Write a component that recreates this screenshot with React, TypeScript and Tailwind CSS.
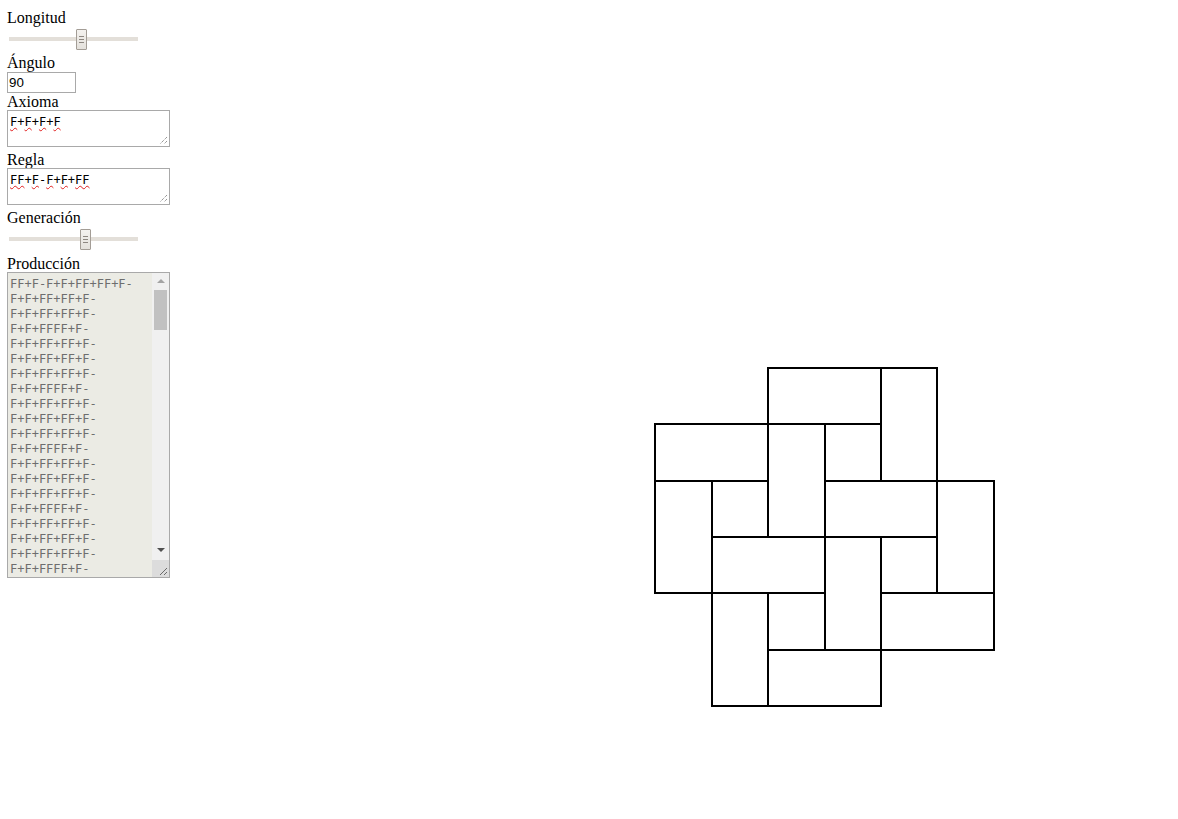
import React from 'react';

const GX = [655, 712, 768, 825, 881, 937, 994];
const GY = [368, 424, 481, 537, 593, 650, 706];

// [fixed index, from, to] on the grid
const horizontal: [number, number, number][] = [
  [0, 2, 5],
  [1, 0, 4],
  [2, 0, 2],
  [2, 3, 6],
  [3, 1, 5],
  [4, 0, 3],
  [4, 4, 6],
  [5, 2, 6],
  [6, 1, 4],
];

const vertical: [number, number, number][] = [
  [0, 1, 4],
  [1, 2, 6],
  [2, 0, 3],
  [2, 4, 6],
  [3, 1, 5],
  [4, 0, 2],
  [4, 3, 6],
  [5, 0, 4],
  [6, 2, 5],
];

const production = [
  'FF+F-F+F+FF+FF+F-',
  'F+F+FF+FF+F-',
  'F+F+FF+FF+F-',
  'F+F+FFFF+F-',
  'F+F+FF+FF+F-',
  'F+F+FF+FF+F-',
  'F+F+FF+FF+F-',
  'F+F+FFFF+F-',
  'F+F+FF+FF+F-',
  'F+F+FF+FF+F-',
  'F+F+FF+FF+F-',
  'F+F+FFFF+F-',
  'F+F+FF+FF+F-',
  'F+F+FF+FF+F-',
  'F+F+FF+FF+F-',
  'F+F+FFFF+F-',
  'F+F+FF+FF+F-',
  'F+F+FF+FF+F-',
  'F+F+FF+FF+F-',
  'F+F+FFFF+F-',
];

function Slider({ thumb }: { thumb: number }) {
  return (
    <div className="relative h-[28px] w-[140px]">
      <div className="absolute left-[2px] top-[11px] h-[4px] w-[129px] bg-[#e3dfd9]" />
      <div
        className="absolute top-[3px] flex h-[21px] w-[11px] flex-col items-center gap-[2px] rounded-[1px] border border-[#a39d96] bg-gradient-to-b from-[#f4f2ef] to-[#e4e1dc] pt-[6px]"
        style={{ left: thumb }}
      >
        <div className="h-px w-[5px] bg-[#8d8781]" />
        <div className="h-px w-[5px] bg-[#8d8781]" />
        <div className="h-px w-[5px] bg-[#8d8781]" />
      </div>
    </div>
  );
}

function Grip() {
  return (
    <svg className="absolute bottom-[1px] right-[1px]" width="10" height="10" viewBox="0 0 10 10">
      <line x1="9" y1="2" x2="2" y2="9" stroke="#6b6b6b" strokeWidth="1" strokeDasharray="1 1" />
      <line x1="9" y1="6" x2="6" y2="9" stroke="#6b6b6b" strokeWidth="1" strokeDasharray="1 1" />
    </svg>
  );
}

function Spelled({ text }: { text: string }) {
  // underline every run of letters like the spell checker does
  const parts = text.split(/([^A-Za-z]+)/).filter(p => p !== '');
  return (
    <>
      {parts.map((p, i) =>
        /[A-Za-z]/.test(p) ? (
          <span key={i} className="underline decoration-wavy decoration-[#e02020] decoration-1 underline-offset-[1px]">
            {p}
          </span>
        ) : (
          <span key={i}>{p}</span>
        )
      )}
    </>
  );
}

function TextBox({ value }: { value: string }) {
  return (
    <div className="relative h-[37px] w-[163px] border border-[#a9a9a9] bg-white pl-[2px] pt-[4px] font-['DejaVu_Sans_Mono',monospace] text-[12px] leading-[15px] text-black">
      <Spelled text={value} />
      <Grip />
    </div>
  );
}

export default function App() {
  return (
    <div className="flex min-h-[819px] bg-white">
      <div className="w-[170px] shrink-0 pl-[7px] pt-2 font-['Liberation_Serif',serif] text-[16px] leading-[18px] text-black">
        <div className="h-[18px] pt-px">Longitud</div>
        <Slider thumb={69} />
        <div className="h-[18px]">Ángulo</div>
        <div className="h-[21px] w-[69px] border border-[#a9a9a9] pl-[1px] font-['Liberation_Sans',sans-serif] text-[13.33px] leading-[19px]">
          90
        </div>
        <div className="h-[17px] pt-px leading-[16px]">Axioma</div>
        <TextBox value="F+F+F+F" />
        <div className="mt-[3px] h-[18px] pt-px">Regla</div>
        <TextBox value="FF+F-F+F+FF" />
        <div className="mt-[3px] h-[18px] pt-px">Generación</div>
        <Slider thumb={73} />
        <div className="h-[18px] pt-px">Producción</div>
        <div className="relative flex h-[306px] w-[163px] overflow-hidden border border-[#a9a9a9] bg-[#ebebe4]">
          <div className="flex-1 whitespace-pre pl-[2px] pt-[4px] font-['DejaVu_Sans_Mono',monospace] text-[12px] leading-[15px] text-[#6e6e6e]">
            {production.join('\n')}
          </div>
          <div className="relative flex w-[17px] shrink-0 flex-col items-center bg-[#f0f0f0]">
            <svg className="mt-[6px]" width="8" height="5" viewBox="0 0 8 5">
              <polygon points="4,0 8,4 0,4" fill="#a3a3a3" />
            </svg>
            <div className="mt-[6px] h-[40px] w-[13px] bg-[#c1c1c1]" />
            <div className="flex-1" />
            <svg className="mb-[24px]" width="8" height="5" viewBox="0 0 8 5">
              <polygon points="0,0 8,0 4,4" fill="#505050" />
            </svg>
            <div className="absolute bottom-0 left-0 h-[17px] w-[17px] bg-[#dcdcdc]">
              <svg className="absolute bottom-[1px] right-[1px]" width="10" height="10" viewBox="0 0 10 10">
                <line x1="9" y1="2" x2="2" y2="9" stroke="#6b6b6b" strokeWidth="1" />
                <line x1="9" y1="6" x2="6" y2="9" stroke="#6b6b6b" strokeWidth="1" />
              </svg>
            </div>
          </div>
        </div>
      </div>
      <svg width="1008" height="819" viewBox="170 0 1008 819" className="shrink-0">
        {horizontal.map(([j, a, b], i) => (
          <line key={'h' + i} x1={GX[a] - 1} y1={GY[j]} x2={GX[b] + 1} y2={GY[j]} stroke="#000" strokeWidth="2" />
        ))}
        {vertical.map(([j, a, b], i) => (
          <line key={'v' + i} x1={GX[j]} y1={GY[a] - 1} x2={GX[j]} y2={GY[b] + 1} stroke="#000" strokeWidth="2" />
        ))}
      </svg>
    </div>
  );
}
